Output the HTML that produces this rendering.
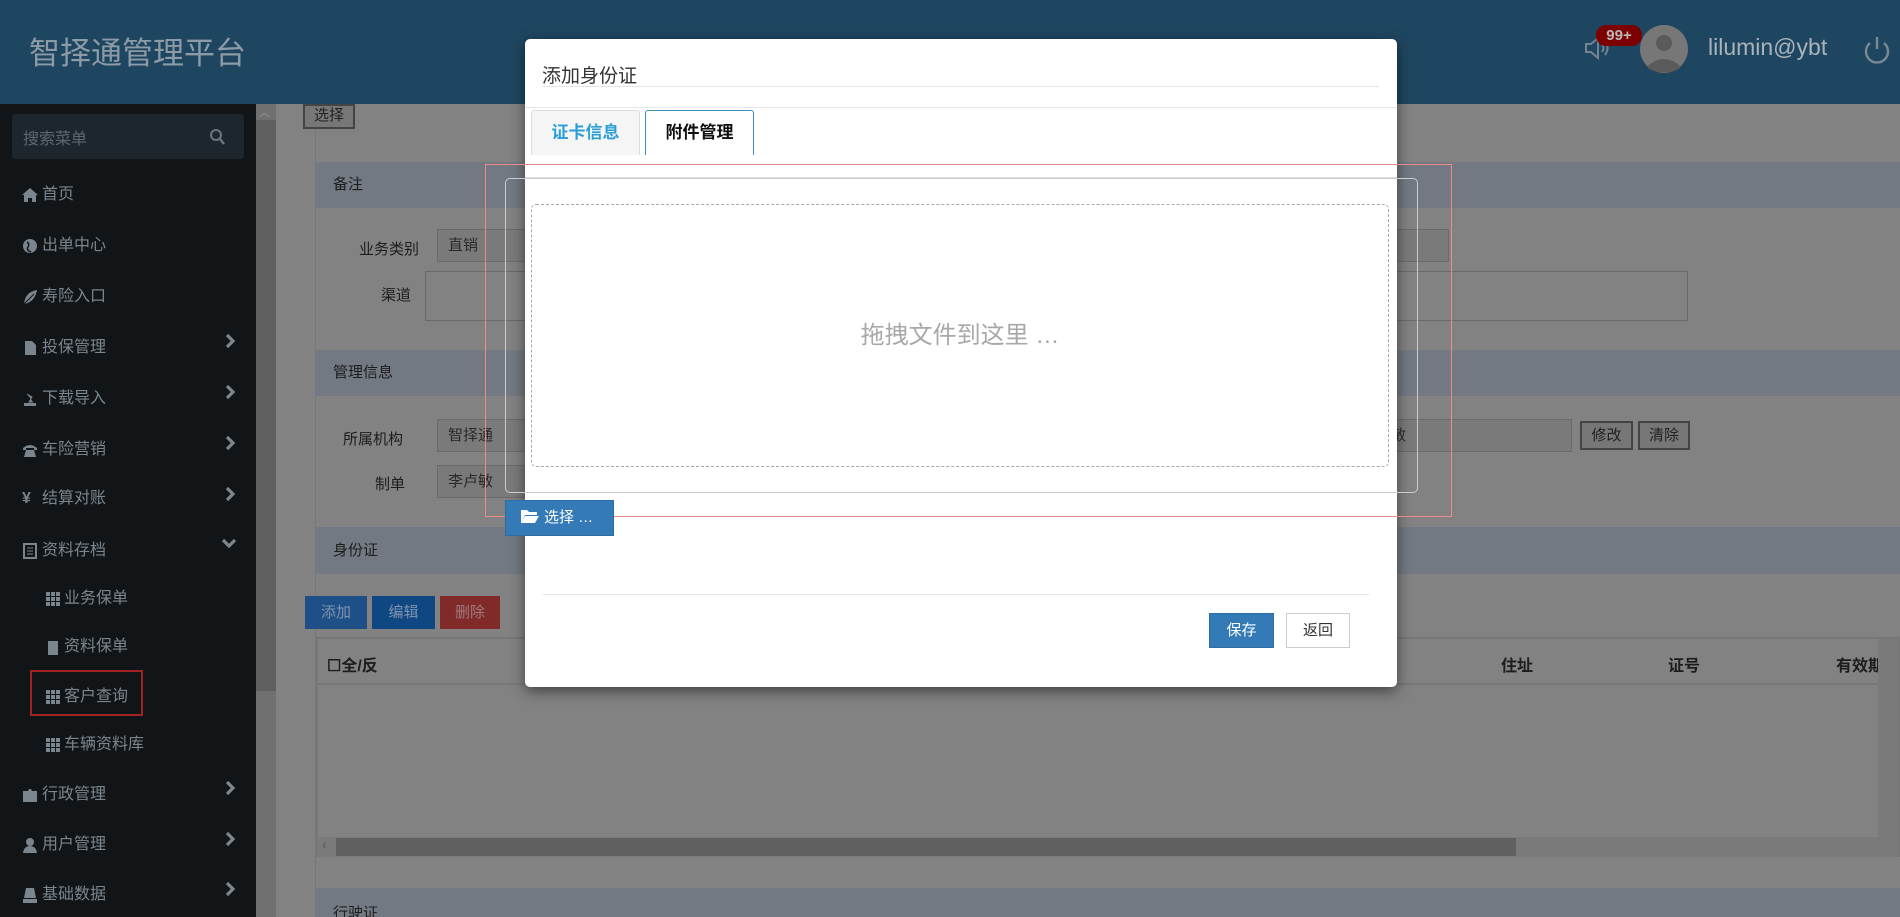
<!DOCTYPE html>
<html style="overflow:hidden;height:917px"><head><meta charset="utf-8"><style>
*{margin:0;padding:0;box-sizing:border-box}
html,body{overflow:hidden}
body{width:1900px;height:917px;position:relative;background:#828282;font-family:"Liberation Sans","Noto Sans CJK SC",sans-serif;font-size:15px;color:#222}
.a{position:absolute}
.hdr{left:0;top:0;width:1900px;height:104px;background:#1f4660}
.side{left:0;top:104px;width:256px;height:813px;background:#111518}
.mi{position:absolute;left:22px;color:#7b858d;font-size:16px;height:24px;line-height:24px;display:flex;align-items:center}
.mi svg{margin-right:4px}
.sub{left:46px}
.chev{position:absolute;left:224px}
.sec{position:absolute;left:315px;width:1585px;background:#737982;color:#1d1d1d;font-size:15px;padding-left:18px}
.lbl{position:absolute;font-size:15px;color:#1d1d1d}
.inp{position:absolute;background:#7a7a7a;border:1px solid #6a6a6a;color:#2a2a2a;font-size:15px;padding-left:10px}
.gbtn{position:absolute;background:#777;border:2px solid #444;font-size:15px;color:#222;text-align:center}
.modal{left:525px;top:39px;width:872px;height:648px;background:#fff;border-radius:5px;box-shadow:0 4px 14px rgba(0,0,0,.5)}
</style></head><body>
<div class="a hdr"></div>
<div class="a" style="left:29px;top:28px;font-size:31px;color:#8c9ba6">智择通管理平台</div>
<svg class="a" style="left:1583px;top:34px" width="30" height="28" viewBox="0 0 30 28"><path d="M3 10h5l7-6v20l-7-6H3z" fill="none" stroke="#6f8594" stroke-width="2"/><path d="M19 10q3 4 0 8M22 7q5 7 0 14" fill="none" stroke="#6f8594" stroke-width="2"/></svg>
<div class="a" style="left:1596px;top:25px;width:46px;height:21px;background:#7d0000;border-radius:10px;color:#b9b9b9;font-size:15px;font-weight:bold;text-align:center;line-height:21px">99+</div>
<svg class="a" style="left:1640px;top:24px" width="48" height="50"><circle cx="24" cy="25" r="24" fill="#777"/><circle cx="24" cy="19" r="8" fill="#5a5a5a"/><path d="M8 42q16-14 32 0v2q-16 9-32 0z" fill="#5a5a5a"/></svg>
<div class="a" style="left:1708px;top:34px;font-size:23px;color:#aab3b9">lilumin@ybt</div>
<svg class="a" style="left:1862px;top:34px" width="30" height="32"><path d="M8 9a11 11 0 1 0 14 0" fill="none" stroke="#7a8a94" stroke-width="2.4"/><line x1="15" y1="3" x2="15" y2="15" stroke="#7a8a94" stroke-width="2.4"/></svg>

<div class="a side"></div>
<div class="a" style="left:256px;top:104px;width:20px;height:813px;background:#707070"></div>
<div class="a" style="left:256px;top:120px;width:20px;height:571px;background:#5f5f5f"></div>
<div class="a" style="left:259px;top:104px;color:#999;font-size:11px">︿</div>
<div class="a" style="left:12px;top:114px;width:232px;height:45px;background:#1e262d;border-radius:3px"></div>
<div class="a" style="left:23px;top:125px;color:#5d676e;font-size:16px">搜索菜单</div>
<svg class="a" style="left:209px;top:128px" width="16" height="18"><circle cx="7" cy="7" r="5" fill="none" stroke="#6c757c" stroke-width="2"/><line x1="11" y1="11" x2="15" y2="16" stroke="#6c757c" stroke-width="2.4"/></svg>
<div class="mi" style="top:183px"><svg width="16" height="16"><path d="M0 8L8 1l8 7h-2v7H10v-4H6v4H2V8z" fill="#7b858d"/></svg>首页</div>
<div class="mi" style="top:234px"><svg width="16" height="16"><circle cx="8" cy="8" r="7" fill="#7b858d"/><path d="M5 4q3 2 1 5t3 5" stroke="#111518" fill="none" stroke-width="1.5"/></svg>出单中心</div>
<div class="mi" style="top:285px"><svg width="16" height="16"><path d="M2 15Q3 3 15 1Q13 13 2 15z" fill="#7b858d"/><path d="M2 15L12 5" stroke="#111518"/></svg>寿险入口</div>
<div class="mi" style="top:336px"><svg width="16" height="16"><path d="M3 1h7l4 4v10H3z" fill="#7b858d"/></svg>投保管理</div>
<div class="mi" style="top:387px"><svg width="16" height="16"><rect x="2" y="12" width="12" height="3" fill="#7b858d"/><path d="M5 3l5 3-3 5h4" fill="#7b858d" stroke="#7b858d"/></svg>下载导入</div>
<div class="mi" style="top:438px"><svg width="16" height="16"><path d="M1 6q7-6 14 0v2h-3V6H4v2H1zM4 8h8l2 7H2z" fill="#7b858d"/></svg>车险营销</div>
<div class="mi" style="top:487px"><span style="width:16px;margin-right:4px;font-weight:bold">¥</span>结算对账</div>
<div class="mi" style="top:539px"><svg width="16" height="16"><rect x="2" y="1" width="12" height="14" fill="none" stroke="#7b858d" stroke-width="2"/><path d="M5 5h6M5 8h6M5 11h6" stroke="#7b858d"/></svg>资料存档</div>
<div class="mi sub" style="top:587px"><svg width="14" height="14"><g fill="#7b858d"><rect x="0" y="0" width="4" height="4"/><rect x="5" y="0" width="4" height="4"/><rect x="10" y="0" width="4" height="4"/><rect x="0" y="5" width="4" height="4"/><rect x="5" y="5" width="4" height="4"/><rect x="10" y="5" width="4" height="4"/><rect x="0" y="10" width="4" height="4"/><rect x="5" y="10" width="4" height="4"/><rect x="10" y="10" width="4" height="4"/></g></svg>业务保单</div>
<div class="mi sub" style="top:635px"><svg width="14" height="16"><path d="M2 2h10v14H2z" fill="#7b858d"/></svg>资料保单</div>
<div class="a" style="left:30px;top:670px;width:113px;height:46px;border:2px solid #a02222"></div>
<div class="mi sub" style="top:685px"><svg width="14" height="14"><g fill="#7b858d"><rect x="0" y="0" width="4" height="4"/><rect x="5" y="0" width="4" height="4"/><rect x="10" y="0" width="4" height="4"/><rect x="0" y="5" width="4" height="4"/><rect x="5" y="5" width="4" height="4"/><rect x="10" y="5" width="4" height="4"/><rect x="0" y="10" width="4" height="4"/><rect x="5" y="10" width="4" height="4"/><rect x="10" y="10" width="4" height="4"/></g></svg>客户查询</div>
<div class="mi sub" style="top:733px"><svg width="14" height="14"><g fill="#7b858d"><rect x="0" y="0" width="4" height="4"/><rect x="5" y="0" width="4" height="4"/><rect x="10" y="0" width="4" height="4"/><rect x="0" y="5" width="4" height="4"/><rect x="5" y="5" width="4" height="4"/><rect x="10" y="5" width="4" height="4"/><rect x="0" y="10" width="4" height="4"/><rect x="5" y="10" width="4" height="4"/><rect x="10" y="10" width="4" height="4"/></g></svg>车辆资料库</div>
<div class="mi" style="top:783px"><svg width="16" height="16"><path d="M1 4h5l1-2h2l1 2h5v11H1z" fill="#7b858d"/></svg>行政管理</div>
<div class="mi" style="top:833px"><svg width="16" height="16"><circle cx="8" cy="5" r="4" fill="#7b858d"/><path d="M1 16q1-7 7-7t7 7z" fill="#7b858d"/></svg>用户管理</div>
<div class="mi" style="top:883px"><svg width="16" height="16"><path d="M4 1h8l2 10H2z" fill="#7b858d"/><rect x="1" y="12" width="14" height="4" fill="#7b858d"/></svg>基础数据</div>
<svg class="chev" style="top:333px" width="12" height="16"><path d="M3 2l6 6-6 6" fill="none" stroke="#7f878d" stroke-width="3.2"/></svg>
<svg class="chev" style="top:384px" width="12" height="16"><path d="M3 2l6 6-6 6" fill="none" stroke="#7f878d" stroke-width="3.2"/></svg>
<svg class="chev" style="top:435px" width="12" height="16"><path d="M3 2l6 6-6 6" fill="none" stroke="#7f878d" stroke-width="3.2"/></svg>
<svg class="chev" style="top:486px" width="12" height="16"><path d="M3 2l6 6-6 6" fill="none" stroke="#7f878d" stroke-width="3.2"/></svg>
<svg class="chev" style="top:537px;left:221px" width="16" height="12"><path d="M2 3l6 6 6-6" fill="none" stroke="#7f878d" stroke-width="3.2"/></svg>
<svg class="chev" style="top:780px" width="12" height="16"><path d="M3 2l6 6-6 6" fill="none" stroke="#7f878d" stroke-width="3.2"/></svg>
<svg class="chev" style="top:831px" width="12" height="16"><path d="M3 2l6 6-6 6" fill="none" stroke="#7f878d" stroke-width="3.2"/></svg>
<svg class="chev" style="top:881px" width="12" height="16"><path d="M3 2l6 6-6 6" fill="none" stroke="#7f878d" stroke-width="3.2"/></svg>

<div class="a" style="left:276px;top:104px;width:1624px;height:813px;background:#828282"></div>
<div class="a" style="left:315px;top:128px;width:1px;height:789px;background:#777"></div>
<div class="gbtn" style="left:303px;top:104px;width:52px;height:25px;line-height:20px">选择</div>
<div class="sec" style="top:162px;height:46px;line-height:46px">备注</div>
<div class="lbl" style="left:359px;top:238px">业务类别</div>
<div class="inp" style="left:437px;top:229px;width:1012px;height:33px;line-height:31px">直销</div>
<div class="lbl" style="left:381px;top:284px">渠道</div>
<div class="inp" style="left:425px;top:271px;width:1263px;height:50px;background:#828282"></div>
<div class="sec" style="top:350px;height:46px;line-height:46px">管理信息</div>
<div class="lbl" style="left:343px;top:428px">所属机构</div>
<div class="inp" style="left:437px;top:419px;width:300px;height:33px;line-height:31px">智择通</div>
<div class="inp" style="left:1350px;top:419px;width:222px;height:33px;line-height:31px">李卢敏</div>
<div class="gbtn" style="left:1580px;top:421px;width:53px;height:29px;line-height:25px">修改</div>
<div class="gbtn" style="left:1638px;top:421px;width:52px;height:29px;line-height:25px">清除</div>
<div class="lbl" style="left:375px;top:473px">制单</div>
<div class="inp" style="left:437px;top:465px;width:300px;height:33px;line-height:31px">李卢敏</div>
<div class="sec" style="top:527px;height:47px;line-height:47px">身份证</div>
<div class="a" style="left:305px;top:596px;width:62px;height:33px;background:#1e4f87;color:#7f94ac;text-align:center;line-height:33px">添加</div>
<div class="a" style="left:372px;top:596px;width:63px;height:33px;background:#0f4783;color:#7f94ac;text-align:center;line-height:33px">编辑</div>
<div class="a" style="left:440px;top:596px;width:60px;height:33px;background:#802a2a;color:#a07a7a;text-align:center;line-height:33px">删除</div>
<div class="a" style="left:316px;top:637px;width:1584px;height:220px;border:2px solid #777"></div>
<div class="a" style="left:318px;top:639px;width:1560px;height:46px;border-bottom:2px solid #777;font-weight:bold;font-size:16px;color:#1d1d1d;overflow:hidden">
<span class="a" style="left:9px;top:13px">☐全/反</span><span class="a" style="left:1183px;top:13px">住址</span><span class="a" style="left:1350px;top:13px">证号</span><span class="a" style="left:1518px;top:13px;white-space:nowrap">有效期限</span></div>
<div class="a" style="left:318px;top:837px;width:1560px;height:20px;background:#7a7a7a"></div>
<div class="a" style="left:336px;top:838px;width:1180px;height:18px;background:#606060"></div>
<div class="a" style="left:322px;top:836px;color:#555;font-size:14px">‹</div>
<div class="a" style="left:1878px;top:639px;width:20px;height:218px;background:#7a7a7a"></div>
<div class="sec" style="top:888px;height:29px;line-height:40px;padding-top:6px;overflow:hidden">行驶证</div>

<div class="a modal"></div>
<div class="a" style="left:542px;top:61px;font-size:19px;color:#333">添加身份证</div>
<div class="a" style="left:542px;top:86px;width:837px;height:1px;background:#e5e5e5"></div>
<div class="a" style="left:525px;top:107px;width:872px;height:1px;background:#e5e5e5"></div>
<div class="a" style="left:531px;top:110px;width:109px;height:45px;background:#f5f5f5;border:1px solid #ddd;border-bottom:none;border-radius:3px 3px 0 0;color:#2a9fd6;font-weight:bold;font-size:17px;text-align:center;line-height:44px">证卡信息</div>
<div class="a" style="left:645px;top:110px;width:109px;height:45px;background:#fff;border:1px solid #3c8dbc;border-bottom:none;border-radius:3px 3px 0 0;color:#111;font-weight:bold;font-size:17px;text-align:center;line-height:44px">附件管理</div>
<div class="a" style="left:525px;top:177px;width:872px;height:1px;background:#ddd"></div>
<div class="a" style="left:505px;top:178px;width:913px;height:315px;border:1px solid #ccc;border-radius:5px"></div>
<div class="a" style="left:485px;top:164px;width:967px;height:353px;border:1px solid #f08a8a"></div>
<div class="a" style="left:531px;top:204px;width:858px;height:263px;border:1px dashed #aaa;border-radius:5px;text-align:center;line-height:262px;font-size:24px;color:#a8a8a8">拖拽文件到这里 …</div>
<div class="a" style="left:505px;top:500px;width:109px;height:36px;background:#337ab7;border:1px solid #2e6da4;color:#fff;font-size:15px;line-height:34px;padding-left:14px"><svg width="20" height="16" style="vertical-align:-2px;margin-right:4px"><path d="M1 2h6l2 2h8v3H5l-4 8z" fill="#fff"/><path d="M5 8h14l-4 7H1z" fill="#fff"/></svg>选择 …</div>
<div class="a" style="left:543px;top:594px;width:826px;height:1px;background:#e5e5e5"></div>
<div class="a" style="left:1209px;top:613px;width:65px;height:35px;background:#337ab7;border:1px solid #2e6da4;color:#fff;text-align:center;line-height:33px">保存</div>
<div class="a" style="left:1286px;top:613px;width:64px;height:35px;background:#fff;border:1px solid #ccc;color:#333;text-align:center;line-height:33px">返回</div>
</body></html>
